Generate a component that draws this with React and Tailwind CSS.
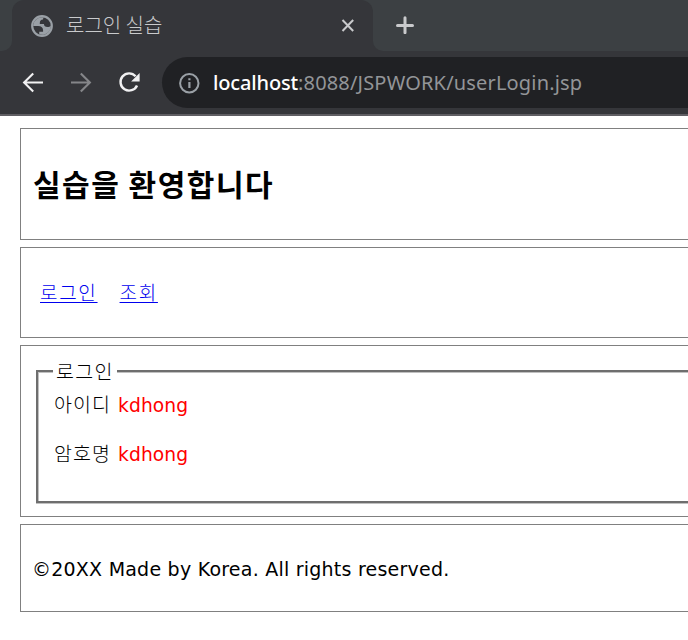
const uiFont = "font-['Noto_Sans','Noto_Sans_CJK_KR',sans-serif]";
const pageFont = "font-['DejaVu_Sans','Noto_Sans_CJK_KR',sans-serif]";
const korean = "font-['Noto_Sans_CJK_KR',sans-serif] font-light";

function GlobeIcon() {
  return (
    <svg className="ml-[19px] mt-[15px] h-[22px] w-[22px] shrink-0" viewBox="2 2 20 20">
      <circle cx="12" cy="12" r="8.9" fill="none" stroke="#9aa0a6" strokeWidth="2" />
      <path
        d="M4 12h4.4c3.407.022 4.922 1.73 4.543 5.127H9.488v2.47a8.004 8.004 0 0 0 10.498-8.083C19.327 12.504 18.331 13 17 13c-2.137 0-3.206-.916-3.206-2.75h-3.748c-.274-2.728.683-4.092 2.87-4.092 0-.975.327-1.597.811-1.97A8.004 8.004 0 0 0 4 12z"
        fill="#9aa0a6"
      />
    </svg>
  );
}

function Tabs() {
  return (
    <div className="flex h-[51px] bg-[#35363a]">
      <div className="h-full w-3 rounded-br-[10px] bg-[#3c4043]" />
      <div className="h-full w-[361px] bg-[linear-gradient(#3c4043_50%,#35363a_50%)]">
        <div className="flex h-full rounded-t-[12px] bg-[#35363a]">
          <GlobeIcon />
          <span className={`${korean} ml-[13px] mt-[10px] h-[30px] whitespace-nowrap text-[20px] leading-[30px] text-[#c9cacc]`}>로그인 실습</span>
          <svg className="ml-auto mr-[18px] mt-[18px] h-[14px] w-[14px]" viewBox="0 0 14 14" stroke="#c9cacc" strokeWidth="2">
            <path d="M1.5 2 12.2 13M12.2 2 1.5 13" />
          </svg>
        </div>
      </div>
      <div className="flex h-full flex-1 rounded-bl-[10px] bg-[#3c4043]">
        <svg className="ml-[23px] mt-[16px] h-[18px] w-[18px]" viewBox="0 0 18 18" stroke="#c9cacc" strokeWidth="3" strokeLinecap="round">
          <path d="M9 1.7V16.7M1.5 9.4H16.5" />
        </svg>
      </div>
    </div>
  );
}

function Toolbar() {
  return (
    <div className="flex h-[65px] border-b-2 border-[#5f5e63] bg-[#35363a] pt-[6px]">
      <svg className="ml-[22px] mt-[15px] h-[22px] w-[22px]" viewBox="0 0 22 22" fill="none" stroke="#f1f1f2" strokeWidth="2.1">
        <path d="M21 10.5H2.5M11.2 1.4 2.1 10.5l9.1 9.1" />
      </svg>
      <svg className="ml-[26px] mt-[15px] h-[22px] w-[22px]" viewBox="0 0 22 22" fill="none" stroke="#858689" strokeWidth="2.1">
        <path d="M1 10.5h18.5M10.8 1.4l9.1 9.1-9.1 9.1" />
      </svg>
      <svg className="ml-[26px] mt-[15px] h-[22px] w-[22px]" viewBox="0 0 22 22" fill="none">
        <path d="M17.6 4.3A8.6 8.6 0 1 0 19 13.4" stroke="#f1f1f2" strokeWidth="2.4" />
        <path d="M21.6 1V9.5H13.1Z" fill="#f1f1f2" />
      </svg>
      <div className="ml-[22px] flex h-[51px] flex-1 rounded-l-full bg-[#202124]">
        <svg className="ml-[16px] mt-[15px] h-[22px] w-[22px]" viewBox="0 0 22 22" fill="none" stroke="#9aa0a6">
          <circle cx="11.3" cy="11.3" r="9.2" strokeWidth="2" />
          <path d="M11.4 10v6.1M11.4 6.2v2" strokeWidth="2.2" />
        </svg>
        <span className={`${uiFont} ml-[13px] mt-[11px] h-[30px] whitespace-nowrap text-[20px] leading-[30px] text-[#939598]`}>
          <span className="inline-block w-[85px] font-medium tracking-[-0.15px] text-white">localhost</span>
          <span className="tracking-[0.17px]">:8088/JSPWORK/userLogin.jsp</span>
        </span>
      </div>
    </div>
  );
}

function Credential({ label, value }) {
  return (
    <div className="flex h-[49px] leading-[30px]">
      <span className={`${korean} w-[64px] text-[19.5px] tracking-[1.1px]`}>{label}</span>
      <span className="mt-[2px] text-[18.7px] tracking-[0.1px] text-[#ff0000]">{value}</span>
    </div>
  );
}

export default function App() {
  return (
    <div className="h-[640px] w-[688px] overflow-hidden bg-white">
      <Tabs />
      <Toolbar />
      <main className={`${pageFont} flex flex-col gap-[7px] pl-5 pt-3 text-black`}>
        <header className="h-[112px] border border-r-0 border-[#808080] pl-[12px] pt-[32px]">
          <h1 className="font-['Noto_Sans_CJK_KR',sans-serif] whitespace-nowrap text-[30px] font-bold leading-[44px] tracking-[1.5px]">실습을 환영합니다</h1>
        </header>
        <nav className={`${korean} flex h-[91px] gap-[22px] border border-r-0 border-[#808080] pl-[19px] pt-[29px] text-[19px] leading-[30px] tracking-[1.7px] text-[#0000ee]`}>
          <a className="h-[30px] underline underline-offset-2">로그인</a>
          <a className="h-[30px] underline underline-offset-2">조회</a>
        </nav>
        <section className="h-[172px] border border-r-0 border-[#808080] pl-[15px] pt-[10px]">
          <fieldset className="h-[147px] border-y-2 border-l-2 border-[#6e6e6e]">
            <legend className={`${korean} relative ml-[15px] h-[30px] w-[64px] bg-white pl-[3px] text-[19.5px] leading-[30px] tracking-[1.3px]`}>로그인</legend>
            <div className="-mt-[14px] h-[129px] border-t border-l border-[#c0c0c0] pl-[15px] pt-[16px]">
              <Credential label="아이디" value="kdhong" />
              <Credential label="암호명" value="kdhong" />
            </div>
          </fieldset>
          <div className="h-px bg-[#c0c0c0]" />
        </section>
        <footer className="h-[88px] border border-r-0 border-[#808080] pl-[11px] pt-[29px] text-[19px] leading-[30px] tracking-[0.23px]">
          ©20XX Made by Korea. All rights reserved.
        </footer>
      </main>
    </div>
  );
}
